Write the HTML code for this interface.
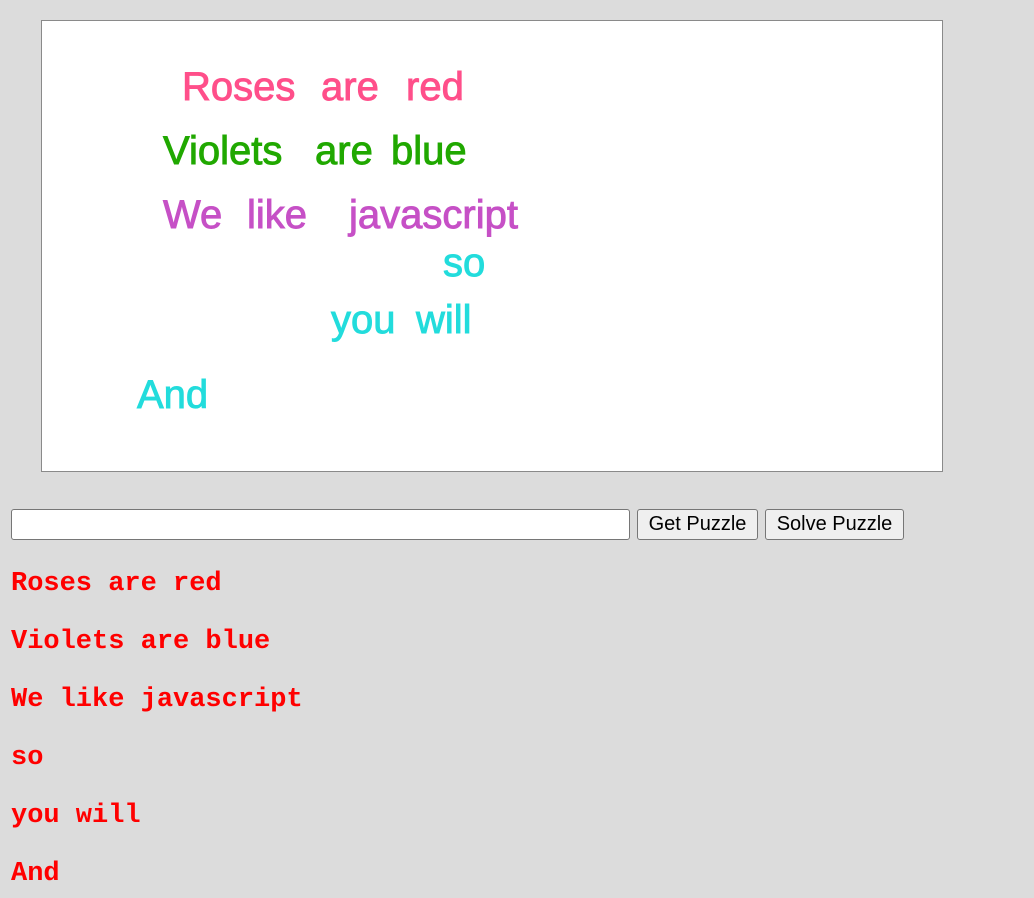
<!DOCTYPE html>
<html><head><style>
body{margin:0;background:#dcdcdc;width:1034px;height:898px;overflow:hidden;position:relative;font-family:"Liberation Sans",Arial,sans-serif}
#cv{position:absolute;left:41px;top:20px;width:900px;height:450px;background:#fff;border:1px solid #8a8a8a}
#inp{position:absolute;left:11px;top:509px;width:617px;height:29px;background:#fff;border:1px solid #767676;border-radius:3px}
.btn{position:absolute;top:509px;height:29px;background:#efefef;border:1px solid #767676;border-radius:3px;font-size:20px;line-height:29px;text-align:center;color:#000}
.r{position:absolute;left:11px;font-family:"Liberation Mono","Courier New",monospace;font-weight:bold;color:#ff0000;font-size:27px;line-height:30px;margin:0;white-space:pre}
</style></head><body>
<div id="cv"></div>
<svg width="1034" height="480" style="position:absolute;left:0;top:0" font-family="Liberation Sans, Arial, sans-serif" font-size="40" stroke-width="0.9">
<g fill="#ff4f8a" stroke="#ff4f8a"><text x="182" y="100">Roses</text><text x="321" y="100">are</text><text x="406" y="100">red</text></g>
<g fill="#20a800" stroke="#20a800"><text x="163" y="164">Violets</text><text x="315" y="164">are</text><text x="391" y="164">blue</text></g>
<g fill="#c650c6" stroke="#c650c6"><text x="163" y="228">We</text><text x="247" y="228">like</text><text x="349" y="228">javascript</text></g>
<g fill="#22dcdc" stroke="#22dcdc"><text x="443" y="276">so</text><text x="331" y="333">you</text><text x="416" y="333">will</text><text x="137" y="408">And</text></g>
</svg>
<div id="inp"></div>
<div class="btn" style="left:637px;width:119px">Get Puzzle</div>
<div class="btn" style="left:765px;width:137px">Solve Puzzle</div>
<div class="r" style="top:569px">Roses are red</div>
<div class="r" style="top:627px">Violets are blue</div>
<div class="r" style="top:685px">We like javascript</div>
<div class="r" style="top:743px">so</div>
<div class="r" style="top:801px">you will</div>
<div class="r" style="top:859px">And</div>
</body></html>
